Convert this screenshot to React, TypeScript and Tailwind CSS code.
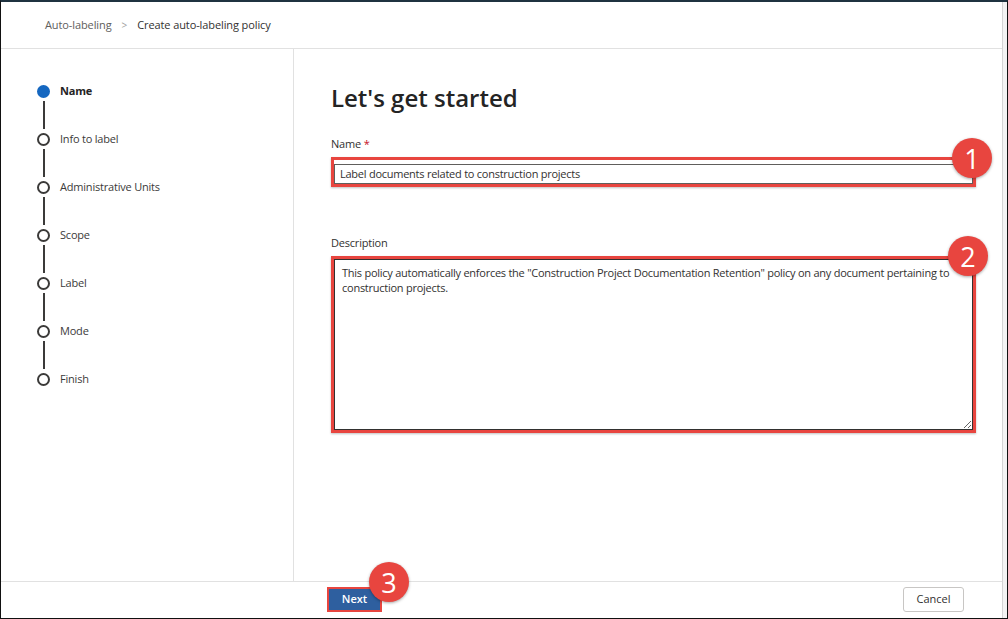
import type { ReactNode } from 'react'

const steps = ['Name', 'Info to label', 'Administrative Units', 'Scope', 'Label', 'Mode', 'Finish']

function Badge({ n, className }: { n: number; className: string }) {
  return (
    <div
      className={`absolute flex h-[40px] w-[40px] items-center justify-center rounded-full bg-[#e8453f] text-[27px] leading-none text-white shadow-[0_1px_3px_rgba(0,0,0,0.35)] ${className}`}
    >
      {n}
    </div>
  )
}

function Step({ label, active, last }: { label: string; active: boolean; last: boolean }) {
  return (
    <div className="flex flex-col">
      <div className="flex h-[14px] items-center gap-[10px]">
        {active ? (
          <span className="h-[13px] w-[13px] rounded-full bg-[#1567c0]" />
        ) : (
          <span className="h-[13px] w-[13px] rounded-full border-2 border-[#3b3a39] bg-white" />
        )}
        <span className={`text-[11px] tracking-[-0.2px] ${active ? 'font-bold text-[#242424]' : 'text-[#3b3a39]'}`}>
          {label}
        </span>
      </div>
      {!last && <span className="my-[3px] ml-[5.5px] h-[28px] w-[2px] bg-[#3b3a39]" />}
    </div>
  )
}

function Field({ label, children }: { label: ReactNode; children: ReactNode }) {
  return (
    <div className="flex flex-col">
      <div className="mb-[5px] text-[11px] leading-[16px] tracking-[-0.2px] text-[#323130]">{label}</div>
      {children}
    </div>
  )
}

export default function App() {
  return (
    <div className="flex h-[619px] w-[1008px] flex-col overflow-hidden border border-t-2 border-[#111] border-t-[#1f3340] bg-white font-['Segoe_UI','Open_Sans',sans-serif]">
      <div className="flex min-h-0 flex-1">
        <div className="flex min-w-0 flex-1 flex-col">
          <header className="flex h-[47px] items-center border-b border-[#e1e1e1] pl-[44px] text-[11px] tracking-[-0.1px]">
            <span className="text-[#605e5c]">Auto-labeling</span>
            <span className="mx-[10px] text-[10px] text-[#a19f9d]">&gt;</span>
            <span className="text-[#323130]">Create auto-labeling policy</span>
          </header>

          <div className="flex min-h-0 flex-1">
            <aside className="w-[293px] shrink-0 border-r border-[#e1e1e1] pl-[36px] pt-[35px]">
              {steps.map((s, i) => (
                <Step key={s} label={s} active={i === 0} last={i === steps.length - 1} />
              ))}
            </aside>

            <section className="flex-1 pl-[37px] pr-[26px] pt-[33px]">
              <h1 className="text-[24px] font-semibold leading-[32px] text-[#242424]">Let's get started</h1>

              <div className="mt-[22px]">
                <Field
                  label={
                    <>
                      Name <span className="text-[#c50f1f]">*</span>
                    </>
                  }
                >
                  <div className="relative border-[3px] border-[#e8453f] shadow-[0_1px_2px_rgba(0,0,0,0.25)]">
                    <input
                      readOnly
                      value="Label documents related to construction projects"
                      className="h-[20px] w-full border border-[#605e5c] bg-white px-[5px] text-[11px] tracking-[-0.25px] text-[#323130] outline-none"
                    />
                    <Badge n={1} className="right-[-19px] top-[-22px]" />
                  </div>
                </Field>
              </div>

              <div className="mt-[48px]">
                <Field label="Description">
                  <div className="relative border-[3px] border-[#e8453f] shadow-[0_1px_2px_rgba(0,0,0,0.25)]">
                    <textarea
                      readOnly
                      defaultValue={
                        'This policy automatically enforces the "Construction Project Documentation Retention" policy on any document pertaining to construction projects.'
                      }
                      className="block h-[171px] w-full resize border border-[#323130] bg-white px-[7px] py-[5px] text-[11px] leading-[15px] tracking-[-0.25px] text-[#323130] outline-none"
                    />
                    <Badge n={2} className="right-[-15px] top-[-23px]" />
                  </div>
                </Field>
              </div>
            </section>
          </div>

          <footer className="flex h-[37px] shrink-0 items-start justify-between border-t border-[#e1e1e1] pl-[326px] pr-[38px] pt-[5px]">
            <div className="relative flex border-[2px] border-[#e8453f]">
              <button className="block h-[21px] w-[51px] bg-[#2e5f9f] text-[11px] font-semibold text-white">Next</button>
              <Badge n={3} className="left-[40px] top-[-27px]" />
            </div>
            <button className="block h-[25px] w-[61px] rounded-[3px] border border-[#c8c6c4] bg-white text-[11px] text-[#323130]">
              Cancel
            </button>
          </footer>
        </div>
        <div className="w-[5px] shrink-0 border-l border-[#d4d4d4] bg-[#f3f3f3]" />
      </div>
    </div>
  )
}
